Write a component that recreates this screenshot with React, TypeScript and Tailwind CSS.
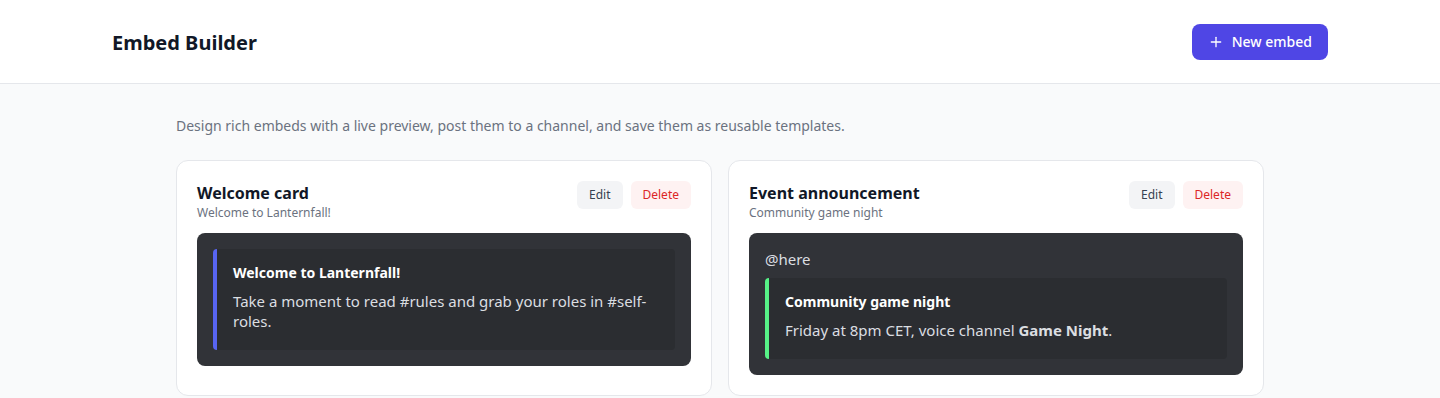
import React from 'react';
import { Plus } from 'lucide-react';

type Template = {
  id: number;
  name: string;
  subtitle: string;
  content?: string;
  title: string;
  description: React.ReactNode;
  color: string;
};

const templates: Template[] = [
  {
    id: 1,
    name: 'Welcome card',
    subtitle: 'Welcome to Lanternfall!',
    title: 'Welcome to Lanternfall!',
    description: 'Take a moment to read #rules and grab your roles in #self-roles.',
    color: 'border-[#5865f2]',
  },
  {
    id: 2,
    name: 'Event announcement',
    subtitle: 'Community game night',
    content: '@here',
    title: 'Community game night',
    description: (
      <>
        Friday at 8pm CET, voice channel <strong className="font-bold">Game Night</strong>.
      </>
    ),
    color: 'border-[#57f287]',
  },
];

const TemplateCard = ({ t }: { t: Template }) => (
  <div className="rounded-xl border border-[#e5e7eb] bg-white p-5">
    <div className="flex items-start justify-between">
      <div>
        <h3 className="text-base font-bold leading-6 text-[#111827]">{t.name}</h3>
        <p className="text-xs leading-4 text-[#6b7280]">{t.subtitle}</p>
      </div>
      <div className="flex gap-2">
        <button className="rounded-md bg-[#f3f4f6] px-3 py-1.5 text-xs leading-4 text-[#374151]">Edit</button>
        <button className="rounded-md bg-[#fef2f2] px-3 py-1.5 text-xs leading-4 text-[#dc2626]">Delete</button>
      </div>
    </div>

    {/* Discord-style preview */}
    <div className="mt-3 rounded-lg bg-[#313338] p-4">
      {t.content && <p className="mb-[9px] text-[15px] leading-5 text-[#dbdee1]">{t.content}</p>}
      <div className={`rounded border-l-4 ${t.color} bg-[#2b2d31] px-4 pt-3.5 pb-[19px]`}>
        <p className="text-sm font-bold leading-5 text-white">{t.title}</p>
        <p className="mt-2 text-[15px] leading-5 text-[#dbdee1]">{t.description}</p>
      </div>
    </div>
  </div>
);

export default function App() {
  return (
    <div className="min-h-screen bg-[#f9fafb] font-['Noto_Sans',sans-serif]">
      <header className="border-b border-[#e5e7eb] bg-white">
        <div className="mx-auto flex max-w-7xl items-center justify-between px-8 pt-6 pb-[23px]">
          <h1 className="pt-0.5 text-xl font-bold text-[#111827]">Embed Builder</h1>
          <button className="flex h-9 items-center gap-2 rounded-lg bg-[#4f46e5] px-4 text-sm font-medium text-white">
            <Plus size={16} />
            New embed
          </button>
        </div>
      </header>

      <main className="mx-auto max-w-6xl px-8 py-8">
        <p className="mb-6 text-sm text-[#6b7280]">
          Design rich embeds with a live preview, post them to a channel, and save them as reusable templates.
        </p>
        <div className="grid grid-cols-2 gap-4">
          {templates.map(t => (
            <TemplateCard key={t.id} t={t} />
          ))}
        </div>
      </main>
    </div>
  );
}
